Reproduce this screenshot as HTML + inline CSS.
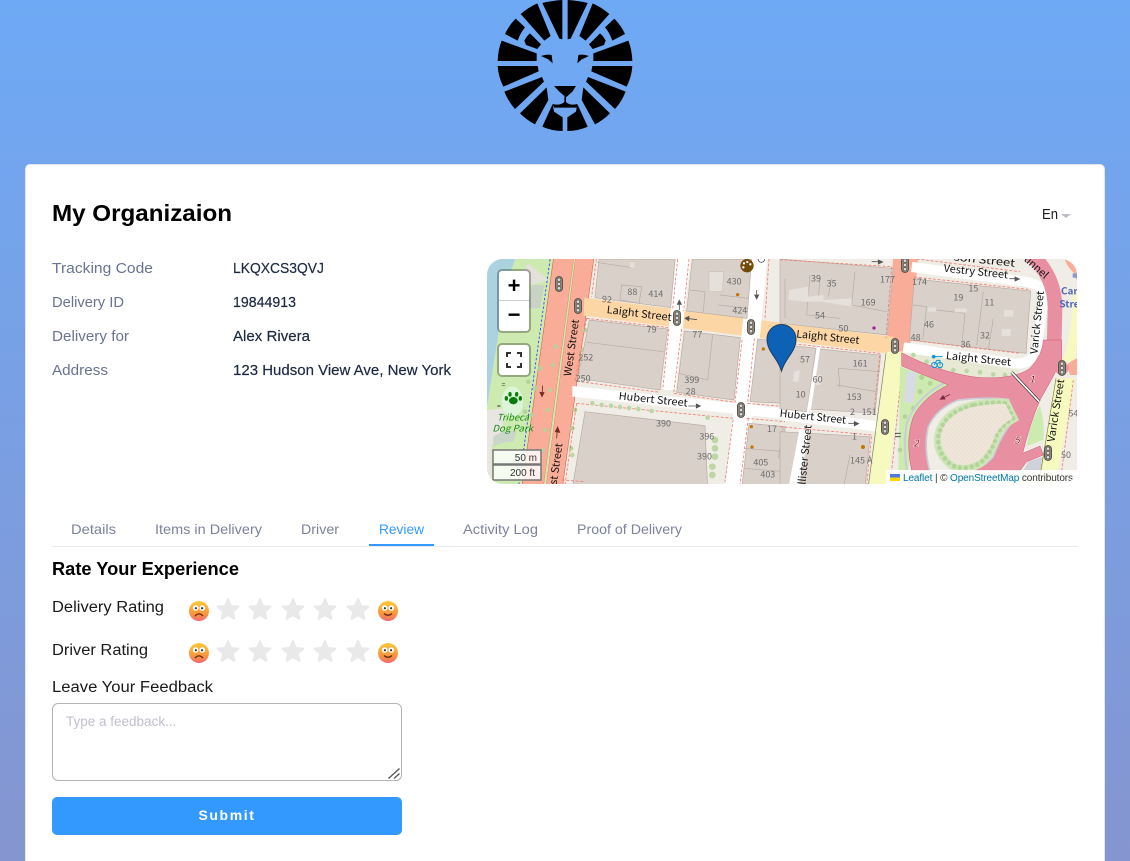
<!DOCTYPE html>
<html lang="en"><head><meta charset="utf-8"><title>Delivery Tracking</title>
<style>
html,body{margin:0;padding:0;width:1130px;height:861px;overflow:hidden}
body{background:linear-gradient(180deg,#6ea9f5 0%,#8595d0 100%);position:relative;font-family:"Liberation Sans",sans-serif}
.card{position:absolute;left:25px;top:164px;width:1080px;height:720px;box-sizing:border-box;background:#fff;border-radius:5px;border:1px solid #e3e6ec}
.abs{position:absolute;left:0;top:0}
textarea{position:absolute;left:52px;top:703px;width:350px;height:78px;box-sizing:border-box;border:1px solid #b4b4b8;border-radius:6px;padding:10px 13px;font:13.5px "Liberation Sans",sans-serif;outline:none;margin:0;background:#fff;resize:none}
textarea::placeholder{color:#c0c0ce}
button{position:absolute;left:52px;top:797px;width:350px;height:38px;background:#3399ff;border:0;border-radius:5px;color:#fff;font:bold 14px "Liberation Sans",sans-serif;letter-spacing:1.6px;padding:0 0 3px}
.mapwrap{position:absolute;left:487px;top:259px;width:590px;height:225px;border-radius:16px;overflow:hidden;background:#f0ede6}
.ctl{position:absolute;left:12px;width:30px;background:#fff;border-radius:3px;box-shadow:0 0 0 2px rgba(0,0,0,.28);color:#000;text-align:center}
</style></head><body>

<svg class="abs" width="1130" height="140" viewBox="0 0 1130 140">
<g transform="translate(480 0) scale(.33333)" fill="#000">
<path d="M187 9Q215 2 247 0V118L238 116Z"/><path d="M122 42Q145 22 172 10L212 108L193 122Z"/><path d="M75 102Q87 76 107 56L135 82Q120 100 113 122Z"/><path d="M150 100L183 133L172 147L138 135L133 122Q140 108 150 100Z"/><path d="M65 122L170 160V183H53Q54 150 65 122Z"/><path d="M53 198H173L176 214L70 260Q55 230 53 198Z"/><path d="M73 275L186 231L192 245L105 327Q85 305 73 275Z"/><path d="M120 340L200 262L205 300L165 373Q140 360 120 340Z"/><path d="M187 380L218 312L222 335L248 352V393Q215 393 187 380Z"/><path d="M183 168Q200 162 215 165L218 190L205 178Z"/>
<path d="M323 9Q295 2 263 0V118L272 116Z"/><path d="M388 42Q365 22 338 10L298 108L317 122Z"/><path d="M435 102Q423 76 403 56L375 82Q390 100 397 122Z"/><path d="M360 100L327 133L338 147L372 135L377 122Q370 108 360 100Z"/><path d="M445 122L340 160V183H457Q456 150 445 122Z"/><path d="M457 198H337L334 214L440 260Q455 230 457 198Z"/><path d="M437 275L324 231L318 245L405 327Q425 305 437 275Z"/><path d="M390 340L310 262L305 300L345 373Q370 360 390 340Z"/><path d="M323 380L292 312L288 335L262 352V393Q295 393 323 380Z"/><path d="M327 168Q310 162 295 165L292 190L305 178Z"/>
<path d="M222 258H288L278 274L258 292L238 275Z"/>
<path d="M218 312Q240 318 253 306V290H258V306Q270 318 292 312L290 323H222Z"/>
</g>
</svg>

<div class="card"></div>

<svg class="abs" width="1130" height="861" viewBox="0 0 1130 861" font-family="Liberation Sans, sans-serif">
<text x="52" y="221" font-size="23" font-weight="700" fill="#000" textLength="180" lengthAdjust="spacingAndGlyphs">My Organizaion</text>
<text x="1042" y="219" font-size="15" fill="#1a1a1a" textLength="16" lengthAdjust="spacingAndGlyphs">En</text>
<path d="M1061 214H1071L1066 218Z" fill="#bdbdc9"/>
<g font-size="15" fill="#687391">
<text x="52" y="273" textLength="101" lengthAdjust="spacingAndGlyphs">Tracking Code</text>
<text x="52" y="307" textLength="72" lengthAdjust="spacingAndGlyphs">Delivery ID</text>
<text x="52" y="341" textLength="77" lengthAdjust="spacingAndGlyphs">Delivery for</text>
<text x="52" y="375" textLength="56" lengthAdjust="spacingAndGlyphs">Address</text>
</g>
<g font-size="15" fill="#1d2942" stroke="#1d2942" stroke-width=".2">
<text x="233" y="273" textLength="91" lengthAdjust="spacingAndGlyphs">LKQXCS3QVJ</text>
<text x="233" y="307" textLength="63" lengthAdjust="spacingAndGlyphs">19844913</text>
<text x="233" y="341" textLength="77" lengthAdjust="spacingAndGlyphs">Alex Rivera</text>
<text x="233" y="375" textLength="218" lengthAdjust="spacingAndGlyphs">123 Hudson View Ave, New York</text>
</g>
<g font-size="14" fill="#7c829b">
<text x="71" y="534" textLength="45" lengthAdjust="spacingAndGlyphs">Details</text>
<text x="155" y="534" textLength="107" lengthAdjust="spacingAndGlyphs">Items in Delivery</text>
<text x="301" y="534" textLength="38" lengthAdjust="spacingAndGlyphs">Driver</text>
<text x="379" y="534" fill="#3399ff" textLength="45" lengthAdjust="spacingAndGlyphs">Review</text>
<text x="463" y="534" textLength="75" lengthAdjust="spacingAndGlyphs">Activity Log</text>
<text x="577" y="534" textLength="105" lengthAdjust="spacingAndGlyphs">Proof of Delivery</text>
</g>
<rect x="52" y="546" width="1026" height="1" fill="#e8eaf2"/>
<rect x="369" y="544" width="65" height="2" fill="#3399ff"/>
<text x="52" y="575" font-size="18.5" font-weight="700" fill="#000" textLength="187" lengthAdjust="spacingAndGlyphs">Rate Your Experience</text>
<g font-size="15.5" fill="#1a1a1a">
<text x="52" y="612" textLength="112" lengthAdjust="spacingAndGlyphs">Delivery Rating</text>
<text x="52" y="655" textLength="96" lengthAdjust="spacingAndGlyphs">Driver Rating</text>
<text x="52" y="692" textLength="161" lengthAdjust="spacingAndGlyphs">Leave Your Feedback</text>
</g>
<defs>
<linearGradient id="em" x1="0" y1="0" x2="0" y2="1"><stop offset="0" stop-color="#fdc93a"/><stop offset=".65" stop-color="#f9953c"/><stop offset="1" stop-color="#f06a78"/></linearGradient>
</defs>
<g fill="#e9e9e9" stroke="#e9e9e9" stroke-width="2" stroke-linejoin="round">
<path transform="translate(228 610)" d="M0-11L2.94-4.05L10.46-3.4L4.76 1.55L6.47 8.9L0 5L-6.47 8.9L-4.76 1.55L-10.46-3.4L-2.94-4.05Z"/>
<path transform="translate(260 610)" d="M0-11L2.94-4.05L10.46-3.4L4.76 1.55L6.47 8.9L0 5L-6.47 8.9L-4.76 1.55L-10.46-3.4L-2.94-4.05Z"/>
<path transform="translate(293 610)" d="M0-11L2.94-4.05L10.46-3.4L4.76 1.55L6.47 8.9L0 5L-6.47 8.9L-4.76 1.55L-10.46-3.4L-2.94-4.05Z"/>
<path transform="translate(325 610)" d="M0-11L2.94-4.05L10.46-3.4L4.76 1.55L6.47 8.9L0 5L-6.47 8.9L-4.76 1.55L-10.46-3.4L-2.94-4.05Z"/>
<path transform="translate(358 610)" d="M0-11L2.94-4.05L10.46-3.4L4.76 1.55L6.47 8.9L0 5L-6.47 8.9L-4.76 1.55L-10.46-3.4L-2.94-4.05Z"/>
<path transform="translate(228 652)" d="M0-11L2.94-4.05L10.46-3.4L4.76 1.55L6.47 8.9L0 5L-6.47 8.9L-4.76 1.55L-10.46-3.4L-2.94-4.05Z"/>
<path transform="translate(260 652)" d="M0-11L2.94-4.05L10.46-3.4L4.76 1.55L6.47 8.9L0 5L-6.47 8.9L-4.76 1.55L-10.46-3.4L-2.94-4.05Z"/>
<path transform="translate(293 652)" d="M0-11L2.94-4.05L10.46-3.4L4.76 1.55L6.47 8.9L0 5L-6.47 8.9L-4.76 1.55L-10.46-3.4L-2.94-4.05Z"/>
<path transform="translate(325 652)" d="M0-11L2.94-4.05L10.46-3.4L4.76 1.55L6.47 8.9L0 5L-6.47 8.9L-4.76 1.55L-10.46-3.4L-2.94-4.05Z"/>
<path transform="translate(358 652)" d="M0-11L2.94-4.05L10.46-3.4L4.76 1.55L6.47 8.9L0 5L-6.47 8.9L-4.76 1.55L-10.46-3.4L-2.94-4.05Z"/>
</g>
<g transform="translate(199 611)"><circle r="10" fill="url(#em)"/><circle cx="-3.3" cy="-3" r="2.8" fill="#fff"/><circle cx="3.3" cy="-3" r="2.8" fill="#fff"/><circle cx="-3.1" cy="-2.8" r="1.1" fill="#333"/><circle cx="3.1" cy="-2.8" r="1.1" fill="#333"/><path d="M-4 5Q0 .8 4 5" fill="none" stroke="#6b2b1c" stroke-width="1.3"/></g>
<g transform="translate(199 653)"><circle r="10" fill="url(#em)"/><circle cx="-3.3" cy="-3" r="2.8" fill="#fff"/><circle cx="3.3" cy="-3" r="2.8" fill="#fff"/><circle cx="-3.1" cy="-2.8" r="1.1" fill="#333"/><circle cx="3.1" cy="-2.8" r="1.1" fill="#333"/><path d="M-4 5Q0 .8 4 5" fill="none" stroke="#6b2b1c" stroke-width="1.3"/></g>
<g transform="translate(388 611)"><circle r="10" fill="url(#em)"/><circle cx="-3.3" cy="-3" r="2.8" fill="#fff"/><circle cx="3.3" cy="-3" r="2.8" fill="#fff"/><circle cx="-3.1" cy="-2.8" r="1.1" fill="#333"/><circle cx="3.1" cy="-2.8" r="1.1" fill="#333"/><path d="M-4 2.5Q0 6 4 2.5" fill="none" stroke="#6b2b1c" stroke-width="1.3"/></g>
<g transform="translate(388 653)"><circle r="10" fill="url(#em)"/><circle cx="-3.3" cy="-3" r="2.8" fill="#fff"/><circle cx="3.3" cy="-3" r="2.8" fill="#fff"/><circle cx="-3.1" cy="-2.8" r="1.1" fill="#333"/><circle cx="3.1" cy="-2.8" r="1.1" fill="#333"/><path d="M-4 2.5Q0 6 4 2.5" fill="none" stroke="#6b2b1c" stroke-width="1.3"/></g>
</svg>

<textarea placeholder="Type a feedback..."></textarea>
<svg class="abs" width="1130" height="861" viewBox="0 0 1130 861" style="pointer-events:none"><path d="M388.5 778.5L399.5 768.5M394 778.5L399.5 773.5" stroke="#555" stroke-width="1.3" fill="none"/></svg>
<button>Submit</button>

<div class="mapwrap">
<svg width="590" height="225" viewBox="487 259 590 225" style="display:block" font-family="Noto Sans CJK SC, DejaVu Sans, sans-serif">
<defs>
<g id="tl"><rect x="-3.6" y="-7.5" width="7.2" height="15" rx="3.6" fill="#8d8478" stroke="#4a4a40" stroke-width=".8"/><circle cy="-4.3" r="1.7" fill="#ddd" stroke="#333" stroke-width=".5"/><circle r="1.7" fill="#ddd" stroke="#333" stroke-width=".5"/><circle cy="4.3" r="1.7" fill="#ddd" stroke="#333" stroke-width=".5"/></g>
<pattern id="st" width="12" height="12" patternUnits="userSpaceOnUse"><circle cx="3" cy="3" r="1" fill="#cdbfa8"/><circle cx="9" cy="9" r="1" fill="#cdbfa8"/></pattern>
</defs>
<rect x="487" y="259" width="590" height="225" fill="#f0ede6"/>

<g transform="translate(485 255) scale(.33333)">
<path d="M0 0H95L60 100L40 240L5 465H0Z" fill="#aad3df"/>
<path d="M95 0H210L115 700H20L5 465L40 240L60 100Z" fill="#cdebb0"/>
<path d="M5 465L60 460L50 540L20 570L20 700H0Z" fill="#e9e6e2"/>
<path d="M25 545Q60 520 95 530L85 560Q50 560 25 575Z" fill="#c9d6c9"/>
<ellipse cx="82" cy="440" rx="32" ry="45" fill="#dcf5d8"/>
<path d="M130 25L190 75L140 90L105 65Z" fill="#e4e0da"/>
<path d="M140 90H178L165 160H125Z" fill="#c8d3c4"/>
<path d="M197 0L100 700" stroke="#2f2fff" stroke-width="2.5" stroke-dasharray="7 6" fill="none"/>
<path d="M207 0H268L175 700H110Z" fill="#f9ad98" stroke="#c9533a" stroke-width="1.5"/>
<path d="M272 0H328L232 700H182Z" fill="#f9ad98" stroke="#c9533a" stroke-width="1.5"/>
<path d="M268 0H272L182 700H175Z" fill="#cdebb0"/>
<g fill="#b5d29a">
<circle cx="212" cy="275" r="6"/><circle cx="204" cy="330" r="6"/><circle cx="195" cy="405" r="6"/><circle cx="188" cy="465" r="6"/><circle cx="180" cy="525" r="6"/><circle cx="172" cy="585" r="6"/><circle cx="165" cy="340" r="7"/><circle cx="150" cy="400" r="7"/><circle cx="130" cy="380" r="7"/><circle cx="120" cy="470" r="7"/><circle cx="140" cy="480" r="7"/><circle cx="300" cy="225" r="7"/><circle cx="295" cy="285" r="7"/><circle cx="270" cy="465" r="7"/><circle cx="262" cy="520" r="7"/><circle cx="258" cy="580" r="7"/>
</g>
<path d="M298 128L900 205V258L296 182Z" fill="#fcd6a4"/>
<path d="M262 393L900 460V492L262 425Z" fill="#fff"/>
<path d="M575 0H618L572 405H530Z" fill="#fff"/>
<path d="M795 0H848L782 700H720Z" fill="#fff"/>

<g fill="#d9d0c9" stroke="#b8aca4" stroke-width="2">
<path d="M342 12H570L557 158L330 128Z"/>
<path d="M622 12H800L786 190L605 168Z"/>
<path d="M313 195L548 222L525 405L278 370Z"/>
<path d="M598 228L766 248L747 435L575 412Z"/>
<path d="M818 252L900 262V445L795 440Z"/>
<path d="M300 470L660 512L668 700H262Z"/>
<path d="M792 505L900 515V700H770Z"/>
</g>
<g fill="none" stroke="#b8aca4" stroke-width="2">
<path d="M335 22L440 38"/><path d="M305 262L535 290"/><path d="M683 240L668 375L580 355"/><path d="M660 110L615 105"/><path d="M660 110L655 170"/><path d="M705 120L790 130"/><path d="M700 150L790 160"/><path d="M780 580L900 590"/><path d="M778 640L900 650"/><path d="M895 515L880 610"/><path d="M410 90L470 95L462 145L405 135Z"/>
</g>
<path d="M672 50H716L712 110H672Z" fill="#e6e0da" stroke="#b8aca4"/>
<path d="M436 22H448V38H434Z" fill="#e6e0da"/>
<g fill="none" stroke="#f07f72" stroke-width="2.5" stroke-dasharray="9 5">
<path d="M334 12L320 125"/><path d="M578 12L563 160"/><path d="M612 12L596 168"/><path d="M852 12L840 190"/><path d="M305 190L270 378L525 412"/><path d="M305 190L552 218L533 405"/><path d="M590 222L566 415L750 442L772 248"/><path d="M808 250L788 445L900 455"/><path d="M275 445L240 690"/><path d="M275 445L745 490L720 680"/><path d="M790 490L765 690"/><path d="M785 490L900 500"/>
<path d="M230 675L300 680"/>
</g>
<g fill="#bcd7a5"><circle cx="322" cy="445" r="7"/><circle cx="350" cy="450" r="7"/><circle cx="378" cy="452" r="7"/><circle cx="405" cy="456" r="7"/><circle cx="432" cy="459" r="7"/><circle cx="460" cy="462" r="7"/><circle cx="500" cy="468" r="7"/><circle cx="668" cy="488" r="7"/><circle cx="690" cy="555" r="10"/><circle cx="690" cy="580" r="10"/><circle cx="690" cy="605" r="10"/><circle cx="682" cy="635" r="10"/><circle cx="682" cy="660" r="10"/><circle cx="262" cy="600" r="7"/></g>
<g fill="#6b6b6b" font-size="27">
<text x="350" y="141" transform="rotate(6 350 141)">92</text>
<text x="427" y="120">88</text><text x="490" y="126">414</text><text x="725" y="88">430</text><text x="742" y="176">424</text><text x="485" y="232">79</text><text x="622" y="248">77</text><text x="280" y="317">252</text><text x="272" y="379">250</text><text x="598" y="384">399</text><text x="602" y="419">28</text><text x="513" y="514">390</text><text x="643" y="553">396</text><text x="636" y="613">390</text><text x="846" y="531">17</text><text x="805" y="631">405</text><text x="826" y="668">403</text>
</g>
<g fill="#111" font-size="31">
<text transform="translate(364 174) rotate(7)" textLength="196" lengthAdjust="spacingAndGlyphs">Laight Street</text>
<text transform="translate(400 433) rotate(6)" textLength="208" lengthAdjust="spacingAndGlyphs">Hubert Street</text>
<text transform="translate(258 365) rotate(-82)" textLength="172" lengthAdjust="spacingAndGlyphs">West Street</text>
<text transform="translate(215 690) rotate(-82)" textLength="125" lengthAdjust="spacingAndGlyphs">st Street</text>
</g>
<g font-size="27" fill="#158a15" font-style="italic">
<text x="36" y="496" textLength="96" lengthAdjust="spacingAndGlyphs">Tribeca</text>
<text x="22" y="530" textLength="122" lengthAdjust="spacingAndGlyphs">Dog Park</text>
</g>
<g fill="#0a7a0a"><ellipse cx="85" cy="437" rx="13" ry="11"/><ellipse cx="64" cy="430" rx="5" ry="7"/><ellipse cx="75" cy="418" rx="5" ry="7"/><ellipse cx="95" cy="418" rx="5" ry="7"/><ellipse cx="106" cy="430" rx="5" ry="7"/></g>
<circle cx="786" cy="32" r="20" fill="#734a08"/><circle cx="777" cy="25" r="3.5" fill="#fff"/><circle cx="787" cy="21" r="3.5" fill="#fff"/><circle cx="796" cy="28" r="3.5" fill="#fff"/><circle cx="775" cy="37" r="3.5" fill="#fff"/>
<circle cx="829" cy="12" r="10" fill="#fff" stroke="#333" stroke-width="2"/>
<g fill="#c77400"><circle cx="758" cy="119" r="5"/><circle cx="835" cy="282" r="5"/><circle cx="799" cy="515" r="5"/><circle cx="801" cy="576" r="5"/></g>
<g stroke="#555" stroke-width="2.5" fill="#555"><path d="M583 165V140M577 148L583 136L589 148Z"/><path d="M815 105V128M809 120L815 132L821 120Z"/><path d="M636 194L604 190M612 184L600 190L611 197Z"/><path d="M610 453H642M634 447L646 453L634 459Z"/></g>
<g stroke="#7a2a20" stroke-width="2.5" fill="#7a2a20"><path d="M173 392L171 420M165 412L171 425L177 413Z"/><path d="M217 520L215 550M211 530L218 516L224 532Z"/></g>
<text x="50" y="396" font-size="20" fill="#333">=</text><text x="36" y="460" font-size="20" fill="#333">=</text>
</g>

<g transform="translate(780 255) scale(.33333)">
<path d="M340 0H415L388 290H320Z" fill="#f9ad98"/>
<path d="M0 12L340 40L322 240L45 210L0 205Z" fill="#d9d0c9" stroke="#b8aca4" stroke-width="2"/>
<path d="M0 268L108 280L80 470L0 462Z" fill="#d9d0c9" stroke="#b8aca4" stroke-width="2"/>
<path d="M116 282L302 300L285 475L84 462Z" fill="#d9d0c9" stroke="#b8aca4" stroke-width="2"/>
<path d="M0 530L270 545L255 700H0Z" fill="#d9d0c9" stroke="#b8aca4" stroke-width="2"/>
<path d="M0 205L340 245V297L0 255Z" fill="#fcd6a4"/>
<path d="M112 270H122L92 470H80Z" fill="#fff"/>
<path d="M0 462L292 498V530L0 495Z" fill="#fff"/>
<path d="M60 515H90L55 700H25Z" fill="#fff"/>
<g fill="none" stroke="#b8aca4" stroke-width="2"><path d="M90 60L80 180L180 190M225 50L215 150L320 170M120 65L115 135M155 70L145 125M180 400L175 340L300 350M170 390L290 410M15 70V190M210 600L190 700"/></g>
<path d="M28 105L85 95V125L130 120V135L215 130V155L125 140L75 140L25 135Z" fill="#e6e0da"/>
<path d="M42 350L60 345L55 380L40 380Z" fill="#e6e0da"/><path d="M112 360L125 360L122 390L108 390Z" fill="#e6e0da"/>
<g fill="none" stroke="#f07f72" stroke-width="2.5" stroke-dasharray="9 5"><path d="M0 14L335 35L318 250"/><path d="M0 262L300 295L282 470"/><path d="M0 515L275 540L260 690"/></g>
<path d="M375 290H322L268 700H320Z" fill="#f7fabf"/><path d="M318 295L264 700" stroke="#7c8a2a" stroke-width="2" fill="none"/>
<path d="M370 296L330 700" stroke="#f07f72" stroke-width="2.5" stroke-dasharray="9 5" fill="none"/>

<path d="M403 72L752 108L738 295L388 255Z" fill="#d9d0c9" stroke="#b8aca4" stroke-width="2"/>
<path d="M400 150L440 155L428 255M470 165L555 175L545 275M610 110L590 270M640 190L625 285" fill="none" stroke="#b8aca4" stroke-width="2"/>
<path d="M672 165H700V185H672ZM665 222H692V243H665ZM445 157H468V170H442ZM525 160H560V172H525Z" fill="#e6e0da"/>
<path d="M395 36L735 80Q800 88 790 140L770 280Q755 332 700 325L370 277" fill="none" stroke="#fff" stroke-width="30"/>
<path d="M403 66L745 103M388 255L720 295M410 12L720 50" fill="none" stroke="#f07f72" stroke-width="2.5" stroke-dasharray="9 5"/>
<path d="M380 295L720 345L700 372L520 372L420 330Z" fill="#e7e9d4"/>
<g fill="#bcd7a5"><circle cx="400" cy="300" r="7"/><circle cx="440" cy="320" r="7"/><circle cx="480" cy="338" r="7"/><circle cx="520" cy="345" r="7"/><circle cx="560" cy="348" r="7"/><circle cx="600" cy="352" r="7"/><circle cx="640" cy="358" r="7"/><circle cx="675" cy="360" r="7"/></g>
<path d="M730 -20Q825 50 825 160L822 290" fill="none" stroke="#e88fa2" stroke-width="44"/>
<path d="M850 0H890V60Q860 40 850 0Z" fill="#f9ad98"/>
<rect x="878" y="55" width="14" height="18" fill="#8f99c9"/>
<path d="M855 100Q860 60 890 70V360H840Q858 250 855 100Z" fill="#f0ede6"/>
<path d="M880 105L905 100L885 320H838Q872 300 880 105Z" fill="#f7fabf"/>

<g transform="translate(300 255)">
<path d="M60 80L205 130L100 240L85 392H55Z" fill="#cdebb0"/>
<path d="M80 95L110 95L100 190L72 185Z" fill="#d9dbe4"/>
<g fill="#b5d29a"><circle cx="125" cy="112" r="8"/><circle cx="150" cy="130" r="7"/><circle cx="120" cy="155" r="8"/><circle cx="100" cy="205" r="7"/><circle cx="75" cy="230" r="7"/><circle cx="60" cy="330" r="7"/></g>
<path d="M195 128Q110 170 80 250Q70 310 80 390" fill="none" stroke="#c9ccd6" stroke-width="6"/>
<path d="M65 38Q170 95 290 112Q400 120 450 85Q490 40 490 0H545V60Q520 110 480 180Q450 250 428 340L480 318L490 345L440 365L420 392H95Q75 300 100 230Q130 170 205 135L65 78Z" fill="#e88fa2" stroke="#d0567a" stroke-width="1.5"/>
<path d="M235 180Q310 170 385 178L405 235Q360 290 340 350Q300 395 240 396H150Q130 320 145 260Q170 205 235 180Z" fill="#f0ede6" stroke="#c9ccd6" stroke-width="5"/>
<path d="M285 195Q340 185 378 190L400 235Q370 250 350 285Q335 340 300 370Q250 395 215 375Q170 340 175 290Q190 215 285 195Z" fill="#cfe5b8" stroke="#cfe5b8" stroke-width="26"/>
<path d="M285 195Q340 185 378 190L400 235Q370 250 350 285Q335 340 300 370Q250 395 215 375Q170 340 175 290Q190 215 285 195Z" fill="none" stroke="#b2d49a" stroke-width="14" stroke-linecap="round" stroke-dasharray="0 18"/>
<path d="M285 200Q340 190 376 192L398 235Q365 250 345 285Q330 335 295 362Q250 385 220 368Q180 335 182 290Q195 220 285 200Z" fill="#efe6d9"/>
<path d="M285 200Q340 190 376 192L398 235Q365 250 345 285Q330 335 295 362Q250 385 220 368Q180 335 182 290Q195 220 285 200Z" fill="url(#st)"/>
<path d="M480 195Q495 250 490 300L440 318Q450 250 480 195Z" fill="#cdebb0"/>
<path d="M430 392L445 365L490 350L485 392Z" fill="#d0d2db"/>
<path d="M395 97L478 185" stroke="#333" stroke-width="9"/><path d="M395 97L478 185" stroke="#fff" stroke-width="5"/>
<path d="M530 115H585L525 440H475Z" fill="#f7fabf"/><path d="M528 115L475 440" stroke="#7c8a2a" stroke-width="2" fill="none"/>
<path d="M580 120L540 435" stroke="#f07f72" stroke-width="2.5" stroke-dasharray="9 5" fill="none"/>
<path d="M560 75Q580 55 610 50V105H570Z" fill="#f9ad98"/>
<circle cx="545" cy="85" r="20" fill="#e88fa2"/>
</g>

<g font-size="31" fill="#111">
<text transform="translate(490 50) rotate(6)" textLength="194" lengthAdjust="spacingAndGlyphs">Vestry Street</text>
<text transform="translate(48 247) rotate(6)" textLength="190" lengthAdjust="spacingAndGlyphs">Laight Street</text>
<text transform="translate(497 312) rotate(6)" textLength="196" lengthAdjust="spacingAndGlyphs">Laight Street</text>
<text transform="translate(-2 485) rotate(6)" textLength="200" lengthAdjust="spacingAndGlyphs">Hubert Street</text>
<text transform="translate(772 298) rotate(-84)" textLength="190" lengthAdjust="spacingAndGlyphs">Varick Street</text>
<text transform="translate(823 562) rotate(-81)" textLength="190" lengthAdjust="spacingAndGlyphs">Varick Street</text>
<text transform="translate(76 690) rotate(-84)" textLength="180" lengthAdjust="spacingAndGlyphs">llister Street</text>
<text transform="translate(730 15) rotate(42)" textLength="86" lengthAdjust="spacingAndGlyphs">unnel</text>
<text transform="translate(520 16) rotate(6)" textLength="185" lengthAdjust="spacingAndGlyphs">son Street</text>
</g>
<g fill="#6b6b6b" font-size="27"><text x="93" y="80">39</text><text x="140" y="95">35</text><text x="300" y="83">177</text><text x="396" y="90">174</text><text x="242" y="152">169</text><text x="105" y="190">54</text><text x="175" y="230">50</text><text x="520" y="137">19</text><text x="565" y="110">15</text><text x="613" y="151">11</text><text x="432" y="217">46</text><text x="600" y="250">32</text><text x="392" y="257">48</text><text x="542" y="277">36</text><text x="60" y="322">57</text><text x="98" y="382">60</text><text x="47" y="428">10</text><text x="218" y="335">161</text><text x="200" y="435">153</text><text x="210" y="480">2</text><text x="245" y="480">151</text><text x="216" y="553">1</text><text x="210" y="626">145 A</text><text x="843" y="609">50</text><text x="865" y="485">54</text></g>
<g font-weight="700" font-size="30" fill="#5566bb"><text x="843" y="118">Car</text><text x="838" y="157">Stre</text></g>
<circle cx="282" cy="219" r="5" fill="#a020a0"/><circle cx="249" cy="576" r="6" fill="#c77400"/>
<g font-size="29" fill="#8a1020" font-style="italic" stroke="#fff" stroke-width="3" paint-order="stroke"><text x="748" y="382">1</text><text x="400" y="574">2</text><text x="703" y="566">5</text></g>
<path d="M510 418L482 432M495 432L481 433L489 422Z" stroke="#7a2a40" stroke-width="2.5" fill="#7a2a40"/>
<g stroke="#555" stroke-width="2.5" fill="#555"><path d="M275 20H302M295 15L308 21L295 27Z"/><path d="M688 71H712M705 66L718 72L705 78Z"/><path d="M205 505H230M223 500L236 506L223 512Z"/></g>
<path d="M345 535H362M345 545H362" stroke="#333" stroke-width="2.5"/>
<g stroke="#0e96dd" fill="none" stroke-width="3"><path d="M455 305H488"/><circle cx="461" cy="305" r="4" fill="#0e96dd"/><circle cx="463" cy="330" r="8"/><circle cx="480" cy="330" r="8"/><path d="M463 330L470 316H480L480 330"/></g>
</g>

<use href="#tl" x="559" y="284"/><use href="#tl" x="578" y="306"/><use href="#tl" x="677" y="318"/><use href="#tl" x="751" y="327"/><use href="#tl" x="905" y="265"/><use href="#tl" x="895" y="346"/><use href="#tl" x="885" y="427"/><use href="#tl" x="1062" y="368"/><use href="#tl" x="1048" y="453"/><use href="#tl" x="741" y="410"/>

<path d="M781.5 371C778 358 767 352 767 339A14.5 14.5 0 0 1 796 339C796 352 785 358 781.5 371Z" fill="#0e62b6" stroke="#1a3f68" stroke-width="1"/>

<g font-family="Liberation Sans, sans-serif">
<rect x="493" y="450" width="48" height="14" fill="#fff" fill-opacity=".82" stroke="#777" stroke-width="1.5"/>
<rect x="493" y="465" width="48" height="15" fill="#fff" fill-opacity=".82" stroke="#777" stroke-width="1.5"/>
<text x="537" y="461" font-size="10" text-anchor="end" fill="#333">50 m</text>
<text x="535" y="476" font-size="10" text-anchor="end" fill="#333">200 ft</text>
<rect x="886" y="470" width="191" height="14" fill="#fff" fill-opacity=".85"/>
<rect x="890" y="474" width="10" height="3.5" fill="#4c7be1"/><rect x="890" y="477.5" width="10" height="3.5" fill="#ffd500"/>
<text x="903" y="481" font-size="10" fill="#333" textLength="170"><tspan fill="#0078a8">Leaflet</tspan> | © <tspan fill="#0078a8">OpenStreetMap</tspan> contributors</text>
</g>
</svg>
<div class="ctl" style="top:12px;height:60px">
<div style="height:30px;border-bottom:1px solid #ccc;box-sizing:border-box;font:bold 22px/29px 'Liberation Sans',sans-serif">+</div>
<div style="height:30px;font:bold 22px/28px 'Liberation Sans',sans-serif">−</div>
</div>
<div class="ctl" style="top:86px;height:30px">
<svg width="30" height="30" viewBox="0 0 30 30" style="display:block"><path d="M8 12V8H12M18 8H22V12M22 18V22H18M12 22H8V18" fill="none" stroke="#333" stroke-width="2"/></svg>
</div>
</div>
</body></html>
